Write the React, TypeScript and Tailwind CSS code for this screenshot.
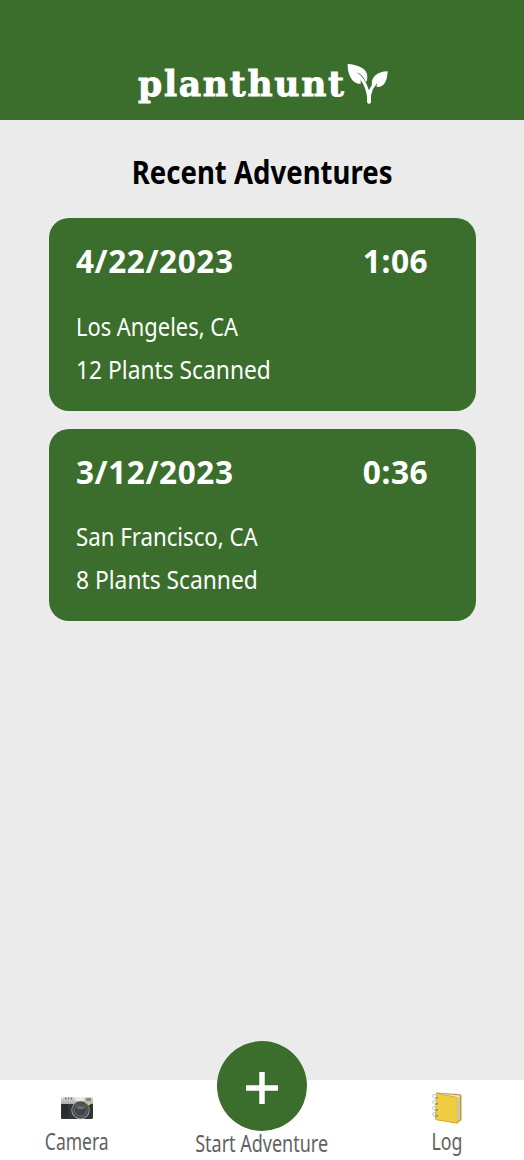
const adventures = [
  { date: "4/22/2023", time: "1:06", place: "Los Angeles, CA", plants: 12, placeScale: "scale-x-[0.893]" },
  { date: "3/12/2023", time: "0:36", place: "San Francisco, CA", plants: 8, placeScale: "scale-x-[0.907]" },
];

const Sprout = () => (
  <svg className="mt-px h-[42px] w-[42px] shrink-0" viewBox="0 0 126 126" fill="none">
    <path d="M5 3C32 5 63 14 64 40C64 48 63 53 60 58C54 42 44 32 31 28C42 40 46 50 44 63C18 63 4 34 5 3Z" fill="#fff" />
    <path d="M125 25C124 54 114 74 92 72C91 64 97 54 105 46C92 50 84 58 78 68C74 43 92 26 125 25Z" fill="#fff" />
    <path d="M30 32C50 45 66 68 69 116" stroke="#fff" strokeWidth="9" strokeLinecap="round" />
    <path d="M70 116C68 88 78 64 103 48" stroke="#fff" strokeWidth="9" strokeLinecap="round" />
    <path d="M69 85V117" stroke="#fff" strokeWidth="11" strokeLinecap="round" />
  </svg>
);

const CameraIcon = () => (
  <svg className="w-[34px] h-6" viewBox="0 0 34 24">
    <defs>
      <linearGradient id="metal" x2="0" y2="1">
        <stop stopColor="#d9dbda" />
        <stop offset="1" stopColor="#a9acab" />
      </linearGradient>
    </defs>
    <path d="M1 2.5Q1 1 3 1H31Q33 1 33 3V8H1Z" fill="url(#metal)" />
    <path d="M1 8H33V22Q33 23 31 23H2Q1 23 1 22Z" fill="#343536" />
    <path d="M2 8H8V22H2Z" fill="#2a2b2c" />
    <path d="M5 1.5h1.5v2H5zM8 1.5h1v2H8zM10.5 1.5h1.5v2h-1.5z" fill="#777" />
    <path d="M14.5 1H24.5L23.5 5H15.5Z" fill="#eeeadd" />
    <path d="M26 2h5v3h-5z" fill="#8d8580" />
    <circle cx="20.5" cy="14" r="9.2" fill="#a5a8a8" />
    <circle cx="20.5" cy="14" r="8.4" fill="#484b4c" />
    <circle cx="20.5" cy="14" r="6.6" fill="#6a6f72" />
    <circle cx="20.5" cy="14" r="5.8" fill="#3f4447" />
    <ellipse cx="20.5" cy="11.5" rx="4" ry="1.8" fill="#686e71" />
    <circle cx="29" cy="8" r="1.3" fill="#f4cf31" />
  </svg>
);

const LogIcon = () => (
  <svg className="w-[30px] h-[32px]" viewBox="0 0 30 32">
    <path d="M4 .5L26 2Q29.5 2.2 29.5 4V28L25 31.5L4 28Z" fill="#c39c25" />
    <path d="M8 1.5L28 3.5V27L25 30Z" fill="#e3e3d9" />
    <path d="M26.6 5V28.5M27.6 4.5V27.5" stroke="#a5a69b" strokeWidth=".5" />
    <path d="M4 1L23 4.5Q25.5 5 25.5 7V31.5L4 28Q3 27.5 3 26Z" fill="#d1a928" />
    <path d="M4 1.8L22.5 5.3Q24.8 5.8 24.8 7.5V30.5L4 27.3Z" fill="#efcf40" />
    <g fill="none" stroke="#b4b4b4" strokeWidth="1">
      <path d="M5 6C1 7 0 4 1 3S4 2 5 5" />
      <path d="M5 12C1 13 0 10 1 9S4 8 5 11" />
      <path d="M5 18C1 19 0 16 1 15S4 14 5 17" />
      <path d="M5 24C1 25 0 22 1 21S4 20 5 23" />
    </g>
    <g fill="#75621f">
      <circle cx="5" cy="6" r=".8" />
      <circle cx="5" cy="12" r=".8" />
      <circle cx="5" cy="18" r=".8" />
      <circle cx="5" cy="24" r=".8" />
    </g>
  </svg>
);

const App = () => {
  return (
    <div className="flex h-[1160px] w-[524px] flex-col overflow-hidden bg-[#ebebeb] font-['Noto_Sans',sans-serif]">
      <header className="flex h-[120.4px] shrink-0 items-start bg-[#3b6e2c] pl-[138px] pt-[62px]">
        <div className="w-[208px] shrink-0">
          <p className="inline-block origin-left scale-x-[0.96] whitespace-nowrap font-['DejaVu_Serif',serif] text-[36px] leading-[42px] font-bold tracking-[1.8px] text-white [-webkit-text-stroke:0.9px_white]">planthunt</p>
        </div>
        <Sprout />
      </header>

      <main className="flex grow flex-col items-center pt-[30.6px]">
        <h1 className="scale-x-[0.835] whitespace-nowrap text-[33px] leading-[42px] font-bold text-black">Recent Adventures</h1>
        <div className="mt-[25px] flex flex-col gap-[18px]">
          {adventures.map((a) => (
            <div key={a.date} className="h-[192.6px] w-[427px] rounded-[20px] bg-[#3b6e2c] pl-[27px] pr-[47px] pt-[22.4px] text-white">
              <div className="flex justify-between text-[33px] leading-[42px] font-bold tracking-[0.6px]">
                <p className="origin-left scale-x-[0.955]">{a.date}</p>
                <p className="origin-right scale-x-[0.96]">{a.time}</p>
              </div>
              <p className={`mt-[23.4px] w-max origin-left text-[24.5px] leading-[42px] ${a.placeScale}`}>{a.place}</p>
              <p className="w-max origin-left scale-x-[0.93] text-[24.5px] leading-[43px]">{a.plants} Plants Scanned</p>
            </div>
          ))}
        </div>
      </main>

      <nav className="relative flex h-20 shrink-0 bg-white text-[24px] leading-8 text-[#626262]">
        <div className="flex w-[154px] flex-col items-center pt-4">
          <CameraIcon />
          <p className="mt-[5px] scale-x-[0.73]">Camera</p>
        </div>
        <div className="flex w-[216px] flex-col items-center pt-[47px]">
          <button className="absolute -top-[39px] left-[217px] flex size-[90px] items-center justify-center rounded-full bg-[#3b6e2c]">
            <svg className="mt-1 size-8" viewBox="0 0 32 32" stroke="#fff" strokeWidth="5.5">
              <path d="M16 0V32M0 16H32" />
            </svg>
          </button>
          <p className="w-max scale-x-[0.75]">Start Adventure</p>
        </div>
        <div className="flex w-[154px] flex-col items-center pt-3">
          <LogIcon />
          <p className="mt-px scale-x-[0.74]">Log</p>
        </div>
      </nav>
    </div>
  );
};

export default App;
